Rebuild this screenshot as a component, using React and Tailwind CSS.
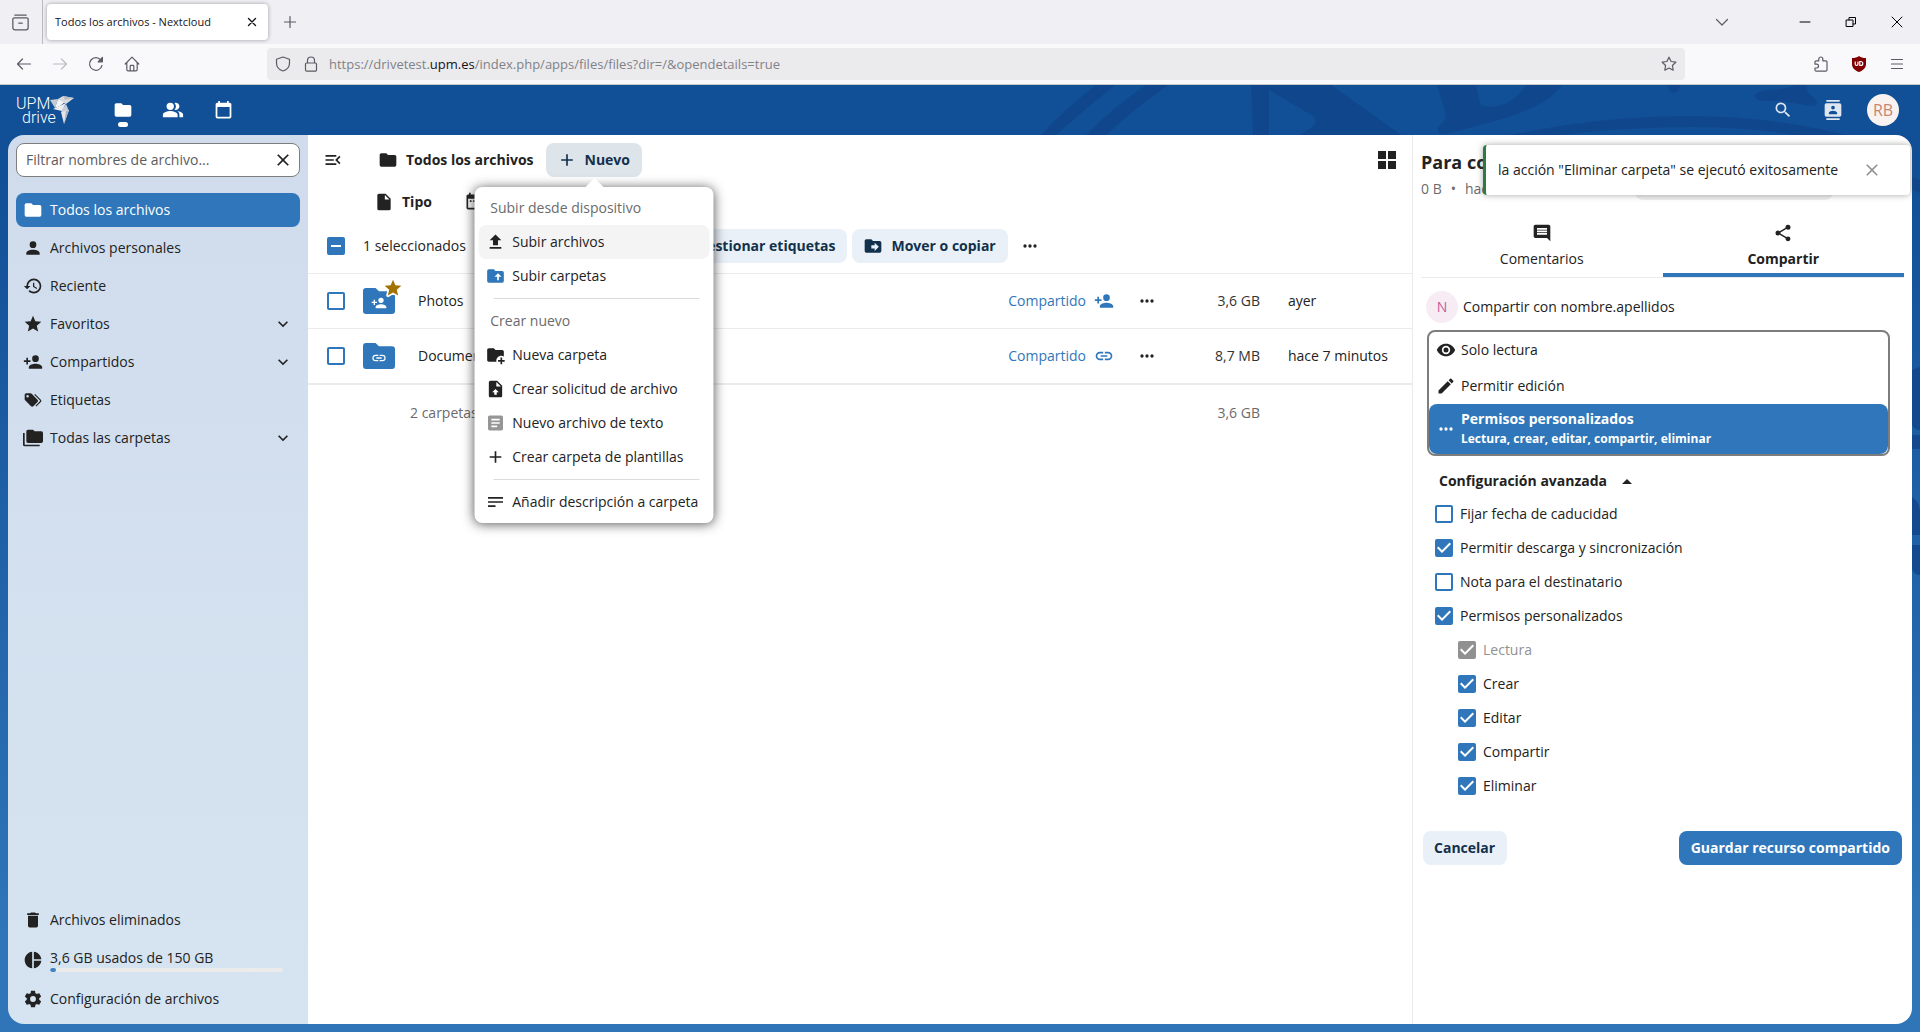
import { useState } from "react";
import { MdPeopleAlt } from "react-icons/md";

const PATHS = {
  folder: "M10,4H4C2.89,4 2,4.89 2,6V18A2,2 0 0,0 4,20H20A2,2 0 0,0 22,18V8C22,6.89 21.1,6 20,6H12L10,4Z",
  account: "M12,4A4,4 0 0,1 16,8A4,4 0 0,1 12,12A4,4 0 0,1 8,8A4,4 0 0,1 12,4M12,14C16.42,14 20,15.79 20,18V20H4V18C4,15.79 7.58,14 12,14Z",
  history: "M13.5,8H12V13L16.28,15.54L17,14.33L13.5,12.25V8M13,3A9,9 0 0,0 4,12H1L4.96,16.03L9,12H6A7,7 0 0,1 13,5A7,7 0 0,1 20,12A7,7 0 0,1 13,19C11.07,19 9.32,18.21 8.06,16.94L6.64,18.36C8.27,20 10.5,21 13,21A9,9 0 0,0 22,12A9,9 0 0,0 13,3",
  star: "M12,17.27L18.18,21L16.54,13.97L22,9.24L14.81,8.62L12,2L9.19,8.62L2,9.24L7.45,13.97L5.82,21L12,17.27Z",
  accountPlus: "M15,14C12.33,14 7,15.33 7,18V20H23V18C23,15.33 17.67,14 15,14M6,10V7H4V10H1V12H4V15H6V12H9V10M15,12A4,4 0 0,0 19,8A4,4 0 0,0 15,4A4,4 0 0,0 11,8A4,4 0 0,0 15,12Z",
  tags: "M5.5,9A1.5,1.5 0 0,0 7,7.5A1.5,1.5 0 0,0 5.5,6A1.5,1.5 0 0,0 4,7.5A1.5,1.5 0 0,0 5.5,9M17.41,11.58C17.77,11.94 18,12.44 18,13C18,13.55 17.78,14.05 17.41,14.41L12.41,19.41C12.05,19.77 11.55,20 11,20C10.45,20 9.95,19.78 9.58,19.41L2.59,12.42C2.22,12.05 2,11.55 2,11V6C2,4.89 2.89,4 4,4H9C9.55,4 10.05,4.22 10.41,4.58L17.41,11.58M13.54,5.71L14.54,4.71L21.41,11.58C21.78,11.94 22,12.45 22,13C22,13.55 21.78,14.05 21.42,14.41L16.04,19.79L15.04,18.79L20.75,13L13.54,5.71Z",
  folders: "M22,4H14L12,2H6A2,2 0 0,0 4,4V16A2,2 0 0,0 6,18H22A2,2 0 0,0 24,16V6A2,2 0 0,0 22,4M2,6H0V11H0V20A2,2 0 0,0 2,22H20V20H2V6Z",
  trash: "M19,4H15.5L14.5,3H9.5L8.5,4H5V6H19M6,19A2,2 0 0,0 8,21H16A2,2 0 0,0 18,19V7H6V19Z",
  pie: "M11,2V22C5.9,21.5 2,17.2 2,12C2,6.8 5.9,2.5 11,2M13,2V11H22C21.5,6.2 17.8,2.5 13,2M13,13V22C17.7,21.5 21.5,17.8 22,13H13Z",
  cog: "M12,15.5A3.5,3.5 0 0,1 8.5,12A3.5,3.5 0 0,1 12,8.5A3.5,3.5 0 0,1 15.5,12A3.5,3.5 0 0,1 12,15.5M19.43,12.97C19.47,12.65 19.5,12.33 19.5,12C19.5,11.67 19.47,11.34 19.43,11L21.54,9.37C21.73,9.22 21.78,8.95 21.66,8.73L19.66,5.27C19.54,5.05 19.27,4.96 19.05,5.05L16.56,6.05C16.04,5.66 15.5,5.32 14.87,5.07L14.5,2.42C14.46,2.18 14.25,2 14,2H10C9.75,2 9.54,2.18 9.5,2.42L9.13,5.07C8.5,5.32 7.96,5.66 7.44,6.05L4.95,5.05C4.73,4.96 4.46,5.05 4.34,5.27L2.34,8.73C2.21,8.95 2.27,9.22 2.46,9.37L4.57,11C4.53,11.34 4.5,11.67 4.5,12C4.5,12.33 4.53,12.65 4.57,12.97L2.46,14.63C2.27,14.78 2.21,15.05 2.34,15.27L4.34,18.73C4.46,18.95 4.73,19.03 4.95,18.95L7.44,17.94C7.96,18.34 8.5,18.68 9.13,18.93L9.5,21.58C9.54,21.82 9.75,22 10,22H14C14.25,22 14.46,21.82 14.5,21.58L14.87,18.93C15.5,18.67 16.04,18.34 16.56,17.94L19.05,18.95C19.27,19.03 19.54,18.95 19.66,18.73L21.66,15.27C21.78,15.05 21.73,14.78 21.54,14.63L19.43,12.97Z",
  chevron: "M7.41,8.58L12,13.17L16.59,8.58L18,10L12,16L6,10L7.41,8.58Z",
  close: "M19,6.41L17.59,5L12,10.59L6.41,5L5,6.41L10.59,12L5,17.59L6.41,19L12,13.41L17.59,19L19,17.59L13.41,12L19,6.41Z",
  menuOpen: "M21,15.61L19.59,17L14.58,12L19.59,7L21,8.39L17.44,12L21,15.61M3,6H16V8H3V6M3,13V11H13V13H3M3,18V16H16V18H3Z",
  plus: "M19,13H13V19H11V13H5V11H11V5H13V11H19V13Z",
  file: "M13,9V3.5L18.5,9M6,2C4.89,2 4,2.89 4,4V20A2,2 0 0,0 6,22H18A2,2 0 0,0 20,20V8L14,2H6Z",
  calendarRange: "M7,10H9V12H7V10M15,10H17V12H15V10M11,10H13V12H11V10M19,3H18V1H16V3H8V1H6V3H5C3.89,3 3,3.9 3,5V19A2,2 0 0,0 5,21H19A2,2 0 0,0 21,19V5A2,2 0 0,0 19,3M19,19H5V8H19V19Z",
  upload: "M9,16V10H5L12,3L19,10H15V16H9M5,20V18H19V20H5Z",
  folderUpload: "M20,6A2,2 0 0,1 22,8V18A2,2 0 0,1 20,20H4A2,2 0 0,1 2,18V6A2,2 0 0,1 4,4H10L12,6H20M10.75,13H14V17H16V13H19.25L15,8.75",
  folderPlus: "M13 19C13 19.34 13.04 19.67 13.09 20H4C2.9 20 2 19.11 2 18V6C2 4.89 2.89 4 4 4H10L12 6H20C21.1 6 22 6.89 22 8V13.81C21.12 13.3 20.1 13 19 13C15.69 13 13 15.69 13 19M20 18V15H18V18H15V20H18V23H20V20H23V18H20Z",
  fileUpload: "M14,2H6C4.89,2 4,2.89 4,4V20C4,21.11 4.89,22 6,22H18C19.11,22 20,21.11 20,20V8L14,2M12,12L16,16H13.5V19H10.5V16H8L12,12M13,9V3.5L18.5,9H13Z",
  textBox: "M14,17H7V15H14M17,13H7V11H17M17,9H7V7H17M19,3H5C3.89,3 3,3.89 3,5V19A2,2 0 0,0 5,21H19A2,2 0 0,0 21,19V5C21,3.89 20.1,3 19,3Z",
  text: "M21,6V8H3V6H21M3,18H12V16H3V18M3,13H21V11H3V13Z",
  folderMove: "M14,18V15H10V11H14V8L19,13M20,6H12L10,4H4C2.89,4 2,4.89 2,6V18A2,2 0 0,0 4,20H20A2,2 0 0,0 22,18V8C22,6.89 21.1,6 20,6Z",
  dots: "M16,12A2,2 0 0,1 18,10A2,2 0 0,1 20,12A2,2 0 0,1 18,14A2,2 0 0,1 16,12M10,12A2,2 0 0,1 12,10A2,2 0 0,1 14,12A2,2 0 0,1 12,14A2,2 0 0,1 10,12M4,12A2,2 0 0,1 6,10A2,2 0 0,1 8,12A2,2 0 0,1 6,14A2,2 0 0,1 4,12Z",
  link: "M3.9,12C3.9,10.29 5.29,8.9 7,8.9H11V7H7A5,5 0 0,0 2,12A5,5 0 0,0 7,17H11V15.1H7C5.29,15.1 3.9,13.71 3.9,12M8,13H16V11H8V13M17,7H13V8.9H17C18.71,8.9 20.1,10.29 20.1,12C20.1,13.71 18.71,15.1 17,15.1H13V17H17A5,5 0 0,0 22,12A5,5 0 0,0 17,7Z",
  grid: "M3,11H11V3H3M3,21H11V13H3M13,21H21V13H13M13,3V11H21V3",
  comment: "M21.99 4c0-1.1-.89-2-1.99-2H4c-1.1 0-2 .9-2 2v12c0 1.1.9 2 2 2h14l4 4-.01-18zM18 14H6v-2h12v2zm0-3H6V9h12v2zm0-3H6V6h12v2z",
  share: "M18,16.08C17.24,16.08 16.56,16.38 16.04,16.85L8.91,12.7C8.96,12.47 9,12.24 9,12C9,11.76 8.96,11.53 8.91,11.3L15.96,7.19C16.5,7.69 17.21,8 18,8A3,3 0 0,0 21,5A3,3 0 0,0 18,2A3,3 0 0,0 15,5C15,5.24 15.04,5.47 15.09,5.7L8.04,9.81C7.5,9.31 6.79,9 6,9A3,3 0 0,0 3,12A3,3 0 0,0 6,15C6.79,15 7.5,14.69 8.04,14.19L15.16,18.34C15.11,18.55 15.08,18.77 15.08,19C15.08,20.61 16.39,21.91 18,21.91C19.61,21.91 20.92,20.6 20.92,19A2.92,2.92 0 0,0 18,16.08Z",
  eye: "M12,9A3,3 0 0,0 9,12A3,3 0 0,0 12,15A3,3 0 0,0 15,12A3,3 0 0,0 12,9M12,17A5,5 0 0,1 7,12A5,5 0 0,1 12,7A5,5 0 0,1 17,12A5,5 0 0,1 12,17M12,4.5C7,4.5 2.73,7.61 1,12C2.73,16.39 7,19.5 12,19.5C17,19.5 21.27,16.39 23,12C21.27,7.61 17,4.5 12,4.5Z",
  pencil: "M20.71,7.04C21.1,6.65 21.1,6 20.71,5.63L18.37,3.29C18,2.9 17.35,2.9 16.96,3.29L15.12,5.12L18.87,8.87M3,17.25V21H6.75L17.81,9.93L14.06,6.18L3,17.25Z",
  menuUp: "M7,15L12,10L17,15H7Z",
  calendar: "M19,19H5V8H19M16,1V3H8V1H6V3H5C3.89,3 3,3.89 3,5V19A2,2 0 0,0 5,21H19A2,2 0 0,0 21,19V5C21,3.89 20.1,3 19,3H18V1",
  magnify: "M9.5,3A6.5,6.5 0 0,1 16,9.5C16,11.11 15.41,12.59 14.44,13.73L14.71,14H15.5L20.5,19L19,20.5L14,15.5V14.71L13.73,14.44C12.59,15.41 11.11,16 9.5,16A6.5,6.5 0 0,1 3,9.5A6.5,6.5 0 0,1 9.5,3M9.5,5C7,5 5,7 5,9.5C5,12 7,14 9.5,14C12,14 14,12 14,9.5C14,7 12,5 9.5,5Z",
  contacts: "M20,0H4V2H20V0M4,24H20V22H4V24M20,4H4A2,2 0 0,0 2,6V18A2,2 0 0,0 4,20H20A2,2 0 0,0 22,18V6A2,2 0 0,0 20,4M12,6.75A2.25,2.25 0 0,1 14.25,9A2.25,2.25 0 0,1 12,11.25A2.25,2.25 0 0,1 9.75,9A2.25,2.25 0 0,1 12,6.75M17,17H7V15.5C7,13.83 10.33,13 12,13C13.67,13 17,13.83 17,15.5V17Z",
};

function Icon({ name, className = "size-5" }) {
  return (
    <svg viewBox="0 0 24 24" fill="currentColor" aria-hidden="true" className={`shrink-0 ${className}`}>
      <path d={PATHS[name]} />
    </svg>
  );
}

/* Thin outline icons of the browser chrome, on a 16px grid. */
function LineIcon({ children, className = "" }) {
  return (
    <svg viewBox="0 0 16 16" fill="none" stroke="currentColor" strokeWidth="1.2" strokeLinecap="round" strokeLinejoin="round" aria-hidden="true" className={`size-4 shrink-0 ${className}`}>
      {children}
    </svg>
  );
}

function ChromeButton({ label, className = "w-9", children }) {
  return (
    <button type="button" aria-label={label} className={`flex h-8 items-center justify-center text-[#5b5b66] ${className}`}>
      {children}
    </button>
  );
}

function Checkbox({ label, defaultChecked, disabled, mixed, hideLabel }) {
  const [on, setOn] = useState(!!defaultChecked);
  return (
    <label className={`flex h-[34px] items-center gap-[7px] ${disabled ? "text-[#919191]" : ""}`}>
      <span className="grid size-[18px] shrink-0">
        <input
          type="checkbox"
          aria-label={hideLabel ? label : undefined}
          checked={on}
          disabled={disabled}
          onChange={(e) => setOn(e.target.checked)}
          className="col-start-1 row-start-1 size-[18px] appearance-none rounded-xs border-2 border-[#2f77ba] bg-white checked:bg-[#2f77ba] disabled:border-[#919191] disabled:bg-[#919191]"
        />
        {on && (
          <svg viewBox="3 3 18 18" aria-hidden="true" className="pointer-events-none col-start-1 row-start-1 size-[18px] fill-white">
            <path d={mixed ? "M17,13H7V11H17" : "M10,17L5,12L6.41,10.58L10,14.17L17.59,6.58L19,8"} />
          </svg>
        )}
      </span>
      {!hideLabel && <span>{label}</span>}
    </label>
  );
}

function BrowserChrome() {
  return (
    <div className="shrink-0 font-['Open_Sans','Noto_Sans',sans-serif] text-[#15141a]">
      <div className="flex h-11 bg-[#f0eff4]">
        <div className="flex w-[43px] items-center justify-center border-r border-[#b9b9bf] pr-[2px] text-[#5b5b66]">
          <LineIcon className="size-[17px]">
            <path d="M2.6 1h10.8M2.2 3.6h11.6a1.4 1.4 0 0 1 1.4 1.4v8a2 2 0 0 1-2 2H2.8a2 2 0 0 1-2-2V5a1.4 1.4 0 0 1 1.4-1.4M6.4 8.6h3.2" />
          </LineIcon>
        </div>
        <div className="my-1 ml-1 flex w-[221px] items-center justify-between rounded bg-white pl-2 pr-2 shadow-[0_0_4px_rgba(0,0,0,0.35)]">
          <span className="truncate text-[11px]">Todos los archivos - Nextcloud</span>
          <button type="button" aria-label="Cerrar pestaña" className="flex size-4 items-center justify-center">
            <LineIcon className="text-[#15141a]"><path d="M4.5 4.5l7 7m0-7l-7 7" strokeWidth="1.4" /></LineIcon>
          </button>
        </div>
        <button type="button" aria-label="Nueva pestaña" className="ml-[6px] flex w-8 items-center justify-center text-[#5b5b66]">
          <LineIcon><path d="M8 2.5v11M2.5 8h11" /></LineIcon>
        </button>
        <div className="flex-1" />
        <button type="button" aria-label="Lista de pestañas" className="mr-[42px] flex w-9 items-center justify-center text-[#5b5b66]">
          <LineIcon><path d="M2.5 5.5L8 11l5.5-5.5" /></LineIcon>
        </button>
        {[
          ["Minimizar", "M3 8h10"],
          ["Restaurar", "M3.5 6h6.5v6.500h-6.500zM6 6V3.500h6.500v6.500H10"],
          ["Cerrar", "M3 3l10 10M13 3L3 13"],
        ].map(([label, d]) => (
          <button key={label} type="button" aria-label={label} className="flex w-[46px] items-center justify-center text-black">
            <LineIcon><path d={d} strokeWidth="1" /></LineIcon>
          </button>
        ))}
      </div>
      <div className="flex h-[41px] items-start border-b border-[#c6c8c4] bg-[#f9f9fb] pt-1">
        <div className="flex w-[267px] shrink-0 pl-[6px]">
          <ChromeButton label="Atrás"><LineIcon><path d="M14.500 8h-13M6.500 3L1.500 8l5 5" /></LineIcon></ChromeButton>
          <ChromeButton label="Adelante"><LineIcon className="text-[#bcbcc2]"><path d="M1.500 8h13M9.500 3l5 5-5 5" /></LineIcon></ChromeButton>
          <ChromeButton label="Recargar"><LineIcon><path d="M14 9.500A6.300 6.300 0 1 1 12.800 4" /><path d="M14.400 1.500v4.300h-4.300z" fill="currentColor" /></LineIcon></ChromeButton>
          <ChromeButton label="Inicio"><LineIcon><path d="M1.200 8L8 1.200 14.800 8M2.800 6.600v7a1.300 1.300 0 0 0 1.300 1.300h7.800a1.300 1.300 0 0 0 1.300-1.300v-7M6.200 14.800V10.200a.8.8 0 0 1 .8-.8h2a.8.8 0 0 1 .8.8v4.600" /></LineIcon></ChromeButton>
        </div>
        <div className="flex h-8 min-w-0 flex-1 items-center rounded bg-[#ebebed] pl-2 pr-2 text-[#5b5b66]">
          <LineIcon><path d="M8 1L14.500 3.200V7c0 4-2.800 6.800-6.500 8-3.700-1.200-6.500-4-6.500-8V3.200z" /></LineIcon>
          <LineIcon className="ml-3"><path d="M4.500 7V4.500a3.500 3.500 0 0 1 7 0V7M3.500 7h9a1 1 0 0 1 1 1v6a1.200 1.200 0 0 1-1.200 1.200H3.700A1.200 1.200 0 0 1 2.500 14V8a1 1 0 0 1 1-1z" /></LineIcon>
          <span className="ml-[10px] flex-1 truncate pt-[2px] text-[13px] text-[#818188]">
            https://drivetest.<span className="text-[#15141a]">upm.es</span>/index.php/apps/files/files?dir=/&amp;opendetails=true
          </span>
          <LineIcon><path d="M8 1.200l2.100 4.300 4.700.7-3.400 3.300.8 4.700L8 12l-4.200 2.200.8-4.700L1.200 6.200l4.700-.7z" /></LineIcon>
        </div>
        <div className="flex w-[235px] shrink-0 justify-end pr-1">
          <ChromeButton label="Extensiones" className="w-[38px]">
            <LineIcon><path d="M2 8.200V6a1.200 1.200 0 0 1 1.200-1.200h2.600V3a2 2 0 0 1 4 0v1.800h3a1.200 1.200 0 0 1 1.200 1.200v8a1.200 1.200 0 0 1-1.200 1.200H3.200A1.200 1.200 0 0 1 2 14v-2h1.600a1.900 1.900 0 0 0 0-3.800z" /></LineIcon>
          </ChromeButton>
          <ChromeButton label="uBlock Origin" className="w-[38px]">
            <svg viewBox="0 0 16 16" className="size-4" aria-hidden="true">
              <path d="M8 0c2 1.500 4 2 7 2v6c0 4-3 6.500-7 8-4-1.500-7-4-7-8V2c3 0 5-.5 7-2z" fill="#800000" />
              <path d="M4.200 5.500v2.600a1.400 1.400 0 0 0 2.800 0V5.500M8.800 5.500v4h1a2 2 0 0 0 0-4z" fill="none" stroke="#fff" strokeWidth="1.200" />
            </svg>
          </ChromeButton>
          <ChromeButton label="Menú" className="w-[38px]"><LineIcon><path d="M2.500 3.500h11M2.500 8h11M2.500 12.500h11" /></LineIcon></ChromeButton>
        </div>
      </div>
    </div>
  );
}

/* Large emblem outlines behind the header and along the right edge. */
function Backdrop() {
  return (
    <svg viewBox="1000 0 920 947" preserveAspectRatio="xMaxYMin slice" aria-hidden="true" className="pointer-events-none absolute right-0 top-0 h-[947px] w-[920px]" fill="#10458a" fillOpacity="0.8">
      <path d="M1096 0h19Q1085 24 1056 50H1041Q1066 23 1096 0zM1146 0h22Q1134 24 1106 50H1086Q1113 22 1146 0z" />
      <path fillRule="evenodd" d="M1251 0H1331L1401 50H1300L1312 42Q1318 37 1313 31L1269 5V50H1253z" />
      <path d="M1437 0H1476L1480 18Q1482 22 1492 22Q1514 19 1526 0H1562Q1546 24 1480 40L1446 49Q1436 50 1438 42Q1446 35 1446 30z" />
      <path d="M1668 0h12Q1678 8 1674 8Q1669 8 1668 0zM1806 0L1808 8Q1817 14 1817 18Q1815 22 1805 20L1782 16H1762Q1755 15 1755 10Q1757 6 1768 5Q1790 4 1795 0z" />
      <path d="M1505 51Q1600 31 1690 31Q1770 31 1850 51H1800Q1750 42 1690 42Q1620 42 1555 51z" />
      <path d="M1912 92L1920 95V108L1912 105zM1912 285Q1916 283 1920 282V345Q1914 345 1912 340zM1912 350h8v14h-8zM1912 412Q1918 415 1920 425V450H1912zM1912 460h8v30q-6 0-8-6z" />
    </svg>
  );
}

function Logo() {
  return (
    <a href="#" aria-label="UPM drive" className="relative flex w-[74px] flex-col pl-4 pt-3 font-['Roboto',sans-serif] text-base leading-[14px] font-light text-white">
      <span>UPM</span>
      <span className="pl-[6px]">drive</span>
      <svg viewBox="0 0 24 28" className="absolute left-[50px] top-[11px] h-7 w-6" aria-hidden="true">
        <path d="M0 4l8-1-3 9z" fill="#c3cad4" />
        <path d="M8 3L5 12l5-2 5-4z" fill="#f4f4f4" />
        <path d="M8 3l5-3 11 2-8 6z" fill="#d9dadd" />
        <path d="M13 0l11 2-9 2z" fill="#b9bec6" />
        <path d="M3 13L16 7l-4 8z" fill="#eceef0" />
        <path d="M16 8l-5 7 2 2 6-2z" fill="#c9ced6" />
        <path d="M11 16l8-2-5 14z" fill="#e3e5e9" />
        <path d="M14 28l5-14-3 1z" fill="#aab2be" />
      </svg>
    </a>
  );
}

function AppHeader() {
  return (
    <header className="relative flex h-[50px] shrink-0 items-stretch justify-between">
      <div className="flex">
        <Logo />
        <nav aria-label="Aplicaciones" className="ml-6 flex text-white">
          <a href="#" aria-label="Archivos" className="relative flex w-[50px] items-center justify-center">
            <Icon name="folder" />
            <span className="absolute bottom-2 h-[5px] w-[10px] rounded-full bg-white" />
          </a>
          <a href="#" aria-label="Contactos" className="flex w-[50px] items-center justify-center"><MdPeopleAlt className="size-[22px]" /></a>
          <a href="#" aria-label="Calendario" className="flex w-[50px] items-center justify-center"><Icon name="calendar" className="size-[21px]" /></a>
        </nav>
      </div>
      <div className="flex pr-3 text-[#dfe6f1]">
        <button type="button" aria-label="Buscar" className="flex w-[50px] items-center justify-center"><Icon name="magnify" /></button>
        <button type="button" aria-label="Buscar contactos" className="flex w-[50px] items-center justify-center"><Icon name="contacts" /></button>
        <button type="button" aria-label="Menú de usuario" className="flex w-[50px] items-center justify-center">
          <span className="flex size-8 items-center justify-center rounded-full bg-[#f8f2f0] text-base text-[#c98572]">RB</span>
        </button>
      </div>
    </header>
  );
}

const NAV = [
  ["folder", "Todos los archivos"],
  ["account", "Archivos personales"],
  ["history", "Reciente"],
  ["star", "Favoritos", true],
  ["accountPlus", "Compartidos", true],
  ["tags", "Etiquetas"],
  ["folders", "Todas las carpetas", true],
];

function Sidebar() {
  return (
    <aside className="flex w-[300px] shrink-0 flex-col bg-linear-to-b from-[#d0dcec] to-[#d6e4f1] p-2">
      <div className="flex h-[34px] shrink-0 items-center rounded-lg border border-[#7d7d7d] bg-white pl-[9px]">
        <input type="text" aria-label="Filtrar nombres de archivo" placeholder="Filtrar nombres de archivo..." className="min-w-0 flex-1 outline-none placeholder:text-[#5c5c5c]" />
        <button type="button" aria-label="Limpiar" className="flex w-8 items-center justify-center"><Icon name="close" /></button>
      </div>
      <nav aria-label="Archivos" className="mt-4 flex flex-1 flex-col gap-1">
        {NAV.map(([icon, label, expandable], i) => (
          <div key={label} className={`flex h-[34px] items-center rounded-lg ${i === 0 ? "bg-[#2f77ba] text-white" : ""}`}>
            <a href="#" className="flex h-full flex-1 items-center">
              <span className="flex w-[34px] justify-center"><Icon name={icon} /></span>
              {label}
            </a>
            {expandable && (
              <button type="button" aria-label={`Abrir ${label}`} className="flex size-[34px] items-center justify-center"><Icon name="chevron" /></button>
            )}
          </div>
        ))}
      </nav>
      <div className="flex flex-col gap-1">
        <a href="#" className="flex h-[34px] items-center"><span className="flex w-[34px] justify-center"><Icon name="trash" /></span>Archivos eliminados</a>
        <a href="#" className="flex h-[37px] items-center">
          <span className="flex w-[34px] justify-center"><Icon name="pie" /></span>
          <span className="mr-[17px] flex flex-1 flex-col">
            <span>3,6 GB usados de 150 GB</span>
            <span className="block h-1 overflow-hidden rounded-full bg-[#ebebeb]"><span className="block h-1 w-[6px] rounded-full bg-[#3f83c4]" /></span>
          </span>
        </a>
        <a href="#" className="flex h-[34px] items-center"><span className="flex w-[34px] justify-center"><Icon name="cog" /></span>Configuración de archivos</a>
      </div>
    </aside>
  );
}

function MenuItem({ icon, children, active, iconClass }) {
  return (
    <button type="button" role="menuitem" className={`flex h-[34px] w-full items-center rounded-lg text-left whitespace-nowrap ${active ? "bg-[#f4f4f4]" : ""}`}>
      <span className={`flex w-[34px] justify-center ${iconClass || ""}`}><Icon name={icon} /></span>
      {children}
    </button>
  );
}

function NewMenu() {
  return (
    <div role="menu" className="absolute left-1/2 top-11 z-20 w-[239px] -translate-x-1/2 rounded-lg bg-white p-1 shadow-[0_1px_12px_rgba(30,30,30,0.75)]">
      <svg viewBox="0 0 18 9" className="absolute -top-[9px] left-[111px] h-[9px] w-[18px] fill-white" aria-hidden="true"><path d="M0 9L9 0l9 9z" /></svg>
      <div className="flex h-[34px] items-center pl-3 text-[#6b6b6b]">Subir desde dispositivo</div>
      <MenuItem icon="upload" active>Subir archivos</MenuItem>
      <MenuItem icon="folderUpload" iconClass="text-[#2f77ba]">Subir carpetas</MenuItem>
      <hr className="my-[5px] mr-[10px] ml-[15px] border-[#dbdbdb]" />
      <div className="flex h-[34px] items-center pl-3 text-[#6b6b6b]">Crear nuevo</div>
      <MenuItem icon="folderPlus">Nueva carpeta</MenuItem>
      <MenuItem icon="fileUpload">Crear solicitud de archivo</MenuItem>
      <MenuItem icon="textBox" iconClass="text-[#969696]">Nuevo archivo de texto</MenuItem>
      <MenuItem icon="plus">Crear carpeta de plantillas</MenuItem>
      <hr className="my-[5px] mr-[10px] ml-[15px] border-[#dbdbdb]" />
      <MenuItem icon="text">Añadir descripción a carpeta</MenuItem>
    </div>
  );
}

function FolderThumb({ badge, favorite }) {
  return (
    <span className="relative flex size-8 items-center justify-center">
      <svg viewBox="0 0 32 26" className="h-[26px] w-8 fill-[#2f77ba]" aria-hidden="true">
        <path d="M3 0H12.500L16 3.200H29A3 3 0 0 1 32 6.200V23A3 3 0 0 1 29 26H3A3 3 0 0 1 0 23V3A3 3 0 0 1 3 0z" />
      </svg>
      <span className="absolute inset-0 flex items-center justify-center pt-1 text-white"><Icon name={badge} className="size-4" /></span>
      {favorite && (
        <svg viewBox="0 0 24 24" className="absolute -right-2 -top-[7px] size-5 overflow-visible" aria-hidden="true">
          <path d={PATHS.star} fill="#a37200" stroke="#fff" strokeWidth="4" paintOrder="stroke" strokeLinejoin="round" />
        </svg>
      )}
    </span>
  );
}

const FILES = [
  { name: "Photos", badge: "accountPlus", favorite: true, size: "3,6 GB", date: "ayer" },
  { name: "Documentos", badge: "link", size: "8,7 MB", date: "hace 7 minutos" },
];

function SoftButton({ icon, children }) {
  return (
    <button type="button" className="flex h-[34px] items-center rounded-lg bg-[#e9f0f7] pl-[11px] pr-3 font-bold whitespace-nowrap text-[#12304b]">
      {icon && <Icon name={icon} className="mr-2 size-5" />}
      {children}
    </button>
  );
}

function FileList() {
  return (
    <main className="flex min-w-0 flex-1 flex-col bg-white pt-2">
      <div className="flex h-[34px] items-center">
        <button type="button" aria-label="Cerrar navegación" className="flex w-[50px] items-center justify-center"><Icon name="menuOpen" /></button>
        <a href="#" className="ml-5 flex h-full items-center gap-2 font-bold whitespace-nowrap"><Icon name="folder" />Todos los archivos</a>
        <div className="relative ml-3">
          <button type="button" aria-expanded="true" className="flex h-[34px] items-center rounded-lg bg-[#dde4ea] pl-[11px] pr-3 font-bold text-[#12304b]">
            <Icon name="plus" className="mr-2 size-5" />
            Nuevo
          </button>
          <NewMenu />
        </div>
        <div className="flex-1" />
        <button type="button" aria-label="Vista de cuadrícula" className="mr-2 flex size-[34px] items-center justify-center"><Icon name="grid" className="size-6" /></button>
      </div>
      <div className="mt-2 flex h-[34px] items-center gap-8 pl-[66px] font-bold">
        <button type="button" className="flex items-center gap-2"><Icon name="file" />Tipo</button>
        <button type="button" className="flex items-center gap-2"><Icon name="calendarRange" />Modificado</button>
      </div>
      <table className="w-full table-fixed border-separate border-spacing-0 text-left">
        <colgroup>
          <col className="w-[55px]" />
          <col className="w-[47px]" />
          <col />
          <col className="w-[176px]" />
          <col className="w-[84px]" />
          <col className="w-[152px]" />
        </colgroup>
        <thead>
          <tr className="h-[55px] [&>th]:border-b [&>th]:border-[#ebebeb]">
            <th className="pl-[19px]"><Checkbox label="Seleccionar todo" defaultChecked mixed hideLabel /></th>
            <th colSpan={5} className="font-normal">
              <div className="flex items-center">
                <span className="w-[295px] shrink-0">1 seleccionados</span>
                <div className="flex items-center gap-[5px]">
                  <SoftButton icon="tags">Gestionar etiquetas</SoftButton>
                  <SoftButton icon="folderMove">Mover o copiar</SoftButton>
                  <button type="button" aria-label="Más acciones" className="flex size-[34px] items-center justify-center"><Icon name="dots" /></button>
                </div>
              </div>
            </th>
          </tr>
        </thead>
        <tbody>
          {FILES.map((f) => (
            <tr key={f.name} className="h-[55px] last:h-14 [&>td]:border-b [&>td]:border-[#ebebeb] last:[&>td]:border-b-2">
              <td className="pl-[19px]"><Checkbox label={`Seleccionar ${f.name}`} hideLabel /></td>
              <td><FolderThumb badge={f.badge} favorite={f.favorite} /></td>
              <td className="pl-2"><a href="#">{f.name}</a></td>
              <td>
                <div className="flex items-center justify-end pr-3">
                  <button type="button" className="flex items-center gap-2 text-[#2f77ba]">
                    Compartido
                    <Icon name={f.badge} />
                  </button>
                  <button type="button" aria-label={`Acciones de ${f.name}`} className="ml-4 flex size-[34px] items-center justify-center"><Icon name="dots" /></button>
                </div>
              </td>
              <td className="text-right text-[#333]">{f.size}</td>
              <td className="pl-7">{f.date}</td>
            </tr>
          ))}
        </tbody>
        <tfoot className="text-[#6b6b6b]">
          <tr className="h-[55px]">
            <td />
            <td />
            <td>2 carpetas</td>
            <td />
            <td className="text-right">3,6 GB</td>
            <td />
          </tr>
        </tfoot>
      </table>
    </main>
  );
}

function Toast() {
  return (
    <div role="status" className="absolute right-[2px] top-[10px] z-30 flex h-[50px] w-[427px] items-center justify-between rounded border-l-[3px] border-[#2d7b43] bg-white pl-3 pr-7 shadow-[0_0_6px_rgba(77,77,77,0.5)]">
      <span className="whitespace-nowrap">la acción "Eliminar carpeta" se ejecutó exitosamente</span>
      <button type="button" aria-label="Cerrar" className="text-[#959595]"><Icon name="close" /></button>
    </div>
  );
}

function Option({ icon, label, hint, active }) {
  return (
    <label className={`flex items-center pl-[7px] ${active ? "h-[50px] rounded-lg bg-[#2f77ba] font-bold text-white" : "h-9"}`}>
      <input type="radio" name="permiso" defaultChecked={active} className="sr-only" />
      <Icon name={icon} />
      <span className="ml-[5px] flex flex-col">
        <span className="leading-5">{label}</span>
        {hint && <span className="text-xs leading-5">{hint}</span>}
      </span>
    </label>
  );
}

function DetailsPanel() {
  return (
    <aside className="flex w-[500px] shrink-0 flex-col border-l border-[#ebebeb] bg-white px-2 pt-3">
      <h2 className="h-[31px] truncate text-lg leading-[31px] font-bold">Para compartir</h2>
      <div className="relative flex h-[22px] items-center gap-[9px] text-[#6b6b6b]">
        <span>0 B</span>
        <span>•</span>
        <span>hace 3 minutos</span>
        <span className="absolute bottom-0 left-[214px] h-5 w-[198px] rounded-lg bg-[#eeeeee]" />
      </div>
      <div role="tablist" className="mt-3 flex h-[66px] border-b border-[#ebebeb]">
        <button type="button" role="tab" aria-selected="false" className="flex flex-1 flex-col items-center justify-end gap-1 pb-[6px]">
          <Icon name="comment" />
          <span className="leading-6">Comentarios</span>
        </button>
        <button type="button" role="tab" aria-selected="true" className="flex flex-1 flex-col items-center justify-end gap-1 border-b-4 border-[#2f77ba] pb-[2px] font-bold">
          <Icon name="share" />
          <span className="leading-6">Compartir</span>
        </button>
      </div>
      <div className="mt-[13px] flex h-8 items-center gap-[5px] pl-[5px]">
        <span className="flex size-8 items-center justify-center rounded-full bg-[#f8ecf4] text-[#c05e9c]">N</span>
        Compartir con nombre.apellidos
      </div>
      <fieldset className="mt-[7px] mr-[14px] ml-[6px] rounded-lg border-2 border-[#7d7d7d]">
        <Option icon="eye" label="Solo lectura" />
        <Option icon="pencil" label="Permitir edición" />
        <Option icon="dots" label="Permisos personalizados" hint="Lectura, crear, editar, compartir, eliminar" active />
      </fieldset>
      <button type="button" className="mt-2 ml-[18px] flex h-[34px] items-center gap-2 self-start font-bold">
        Configuración avanzada
        <Icon name="menuUp" className="size-6" />
      </button>
      <div className="-mt-px pl-[14px]">
        <Checkbox label="Fijar fecha de caducidad" />
        <Checkbox label="Permitir descarga y sincronización" defaultChecked />
        <Checkbox label="Nota para el destinatario" />
        <Checkbox label="Permisos personalizados" defaultChecked />
        <div className="pl-[23px]">
          <Checkbox label="Lectura" defaultChecked disabled />
          <Checkbox label="Crear" defaultChecked />
          <Checkbox label="Editar" defaultChecked />
          <Checkbox label="Compartir" defaultChecked />
          <Checkbox label="Eliminar" defaultChecked />
        </div>
      </div>
      <div className="mt-7 flex justify-between px-[2px]">
        <SoftButton>Cancelar</SoftButton>
        <button type="button" className="h-[34px] rounded-lg bg-[#2f77ba] px-3 font-bold whitespace-nowrap text-white">Guardar recurso compartido</button>
      </div>
    </aside>
  );
}

export default function App() {
  return (
    <div className="flex h-screen flex-col overflow-hidden">
      <BrowserChrome />
      <div className="relative flex min-h-0 flex-1 flex-col bg-linear-to-b from-[#114f97] from-10% to-[#2f75b8] to-90% font-['Open_Sans','Noto_Sans',sans-serif] text-sm text-[#222222]">
        <Backdrop />
        <AppHeader />
        <div className="relative mx-2 mb-2 flex min-h-0 flex-1">
          <div className="flex min-w-0 flex-1 overflow-hidden rounded-2xl">
            <Sidebar />
            <FileList />
            <DetailsPanel />
          </div>
          <Toast />
        </div>
      </div>
    </div>
  );
}
